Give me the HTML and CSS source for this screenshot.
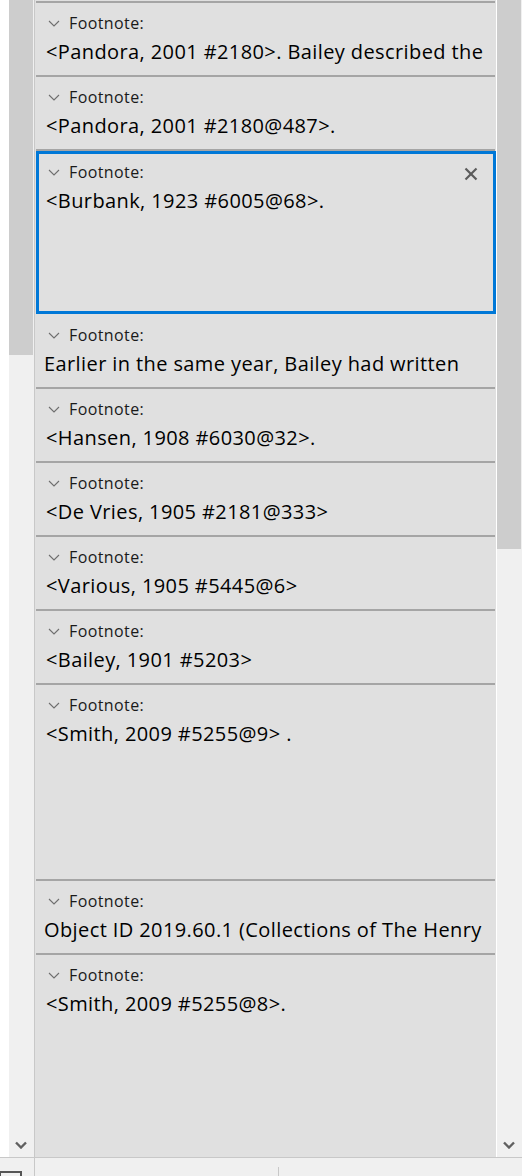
FILE: index.html
```html
<!DOCTYPE html>
<html lang="en">
<head>
  <meta charset="UTF-8">
  <title>Footnotes</title>
  <link rel="stylesheet" href="styles.css">
</head>
<body>
<div class="app">
  <div class="main">
    <div class="gutter"></div>

    <!-- left scrollbar -->
    <div class="vscroll left">
      <div class="thumb"></div>
      <svg class="arrow" width="12" height="8" viewBox="0 0 12 8"><polyline points="1,1.5 6,6.5 11,1.5" /></svg>
    </div>
    <div class="divider"></div>

    <!-- footnote list -->
    <div class="notes">
      <div class="note">
        <div class="fn-head"><svg class="chev" width="12" height="7" viewBox="0 0 12 7"><polyline points="1,1 6,6 11,1" /></svg>Footnote:</div>
        <div class="fn-text">&lt;Pandora, 2001 #2180&gt;. Bailey described the</div>
      </div>
      <div class="note">
        <div class="fn-head"><svg class="chev" width="12" height="7" viewBox="0 0 12 7"><polyline points="1,1 6,6 11,1" /></svg>Footnote:</div>
        <div class="fn-text">&lt;Pandora, 2001 #2180@487&gt;.</div>
      </div>
      <div class="note selected">
        <div class="sel-box">
          <div class="fn-head"><svg class="chev" width="12" height="7" viewBox="0 0 12 7"><polyline points="1,1 6,6 11,1" /></svg>Footnote:</div>
          <div class="fn-text">&lt;Burbank, 1923 #6005@68&gt;.</div>
          <svg class="close" width="14" height="14" viewBox="0 0 14 14"><line x1="1.5" y1="1.5" x2="12.5" y2="12.5" /><line x1="12.5" y1="1.5" x2="1.5" y2="12.5" /></svg>
        </div>
      </div>
      <div class="note after">
        <div class="fn-head"><svg class="chev" width="12" height="7" viewBox="0 0 12 7"><polyline points="1,1 6,6 11,1" /></svg>Footnote:</div>
        <div class="fn-text plain">Earlier in the same year, Bailey had written</div>
      </div>
      <div class="note">
        <div class="fn-head"><svg class="chev" width="12" height="7" viewBox="0 0 12 7"><polyline points="1,1 6,6 11,1" /></svg>Footnote:</div>
        <div class="fn-text">&lt;Hansen, 1908 #6030@32&gt;.</div>
      </div>
      <div class="note">
        <div class="fn-head"><svg class="chev" width="12" height="7" viewBox="0 0 12 7"><polyline points="1,1 6,6 11,1" /></svg>Footnote:</div>
        <div class="fn-text">&lt;De Vries, 1905 #2181@333&gt;</div>
      </div>
      <div class="note">
        <div class="fn-head"><svg class="chev" width="12" height="7" viewBox="0 0 12 7"><polyline points="1,1 6,6 11,1" /></svg>Footnote:</div>
        <div class="fn-text">&lt;Various, 1905 #5445@6&gt;</div>
      </div>
      <div class="note">
        <div class="fn-head"><svg class="chev" width="12" height="7" viewBox="0 0 12 7"><polyline points="1,1 6,6 11,1" /></svg>Footnote:</div>
        <div class="fn-text">&lt;Bailey, 1901 #5203&gt;</div>
      </div>
      <div class="note tall">
        <div class="fn-head"><svg class="chev" width="12" height="7" viewBox="0 0 12 7"><polyline points="1,1 6,6 11,1" /></svg>Footnote:</div>
        <div class="fn-text">&lt;Smith, 2009 #5255@9&gt; .</div>
      </div>
      <div class="note">
        <div class="fn-head"><svg class="chev" width="12" height="7" viewBox="0 0 12 7"><polyline points="1,1 6,6 11,1" /></svg>Footnote:</div>
        <div class="fn-text plain">Object ID 2019.60.1 (Collections of The Henry</div>
      </div>
      <div class="note last">
        <div class="fn-head"><svg class="chev" width="12" height="7" viewBox="0 0 12 7"><polyline points="1,1 6,6 11,1" /></svg>Footnote:</div>
        <div class="fn-text">&lt;Smith, 2009 #5255@8&gt;.</div>
      </div>
    </div>

    <div class="edge"></div>

    <!-- right scrollbar -->
    <div class="vscroll right">
      <div class="thumb"></div>
      <svg class="arrow" width="12" height="8" viewBox="0 0 12 8"><polyline points="1,1.5 6,6.5 11,1.5" /></svg>
    </div>
  </div>

  <!-- status bar -->
  <div class="statusbar">
    <div class="status-box"></div>
    <div class="status-line"></div>
    <div class="status-sep"></div>
  </div>
</div>
</body>
</html>
```

FILE: styles.css
```css
/* Base */
* {
  box-sizing: border-box;
}

body {
  margin: 0;
  background-color: #fff;
  font-family: "Open Sans", "Noto Sans", sans-serif;
}

.app {
  width: 522px;
  height: 1176px;
  display: flex;
  flex-direction: column;
  overflow: hidden;
}

.main {
  display: flex;
  height: 1157px;
}

.gutter {
  width: 9px;
  background-color: #fff;
}

/* Scrollbars */
.vscroll {
  width: 24px;
  background-color: #f0f0f0;
  display: flex;
  flex-direction: column;
  align-items: center;
}

.vscroll .thumb {
  width: 100%;
  background-color: #cdcdcd;
}

.left .thumb {
  height: 355px;
}

.right {
  width: 25px;
  border-right: 1px solid #f0f0f0;
}

.right .thumb {
  height: 549px;
}

.vscroll .arrow {
  margin-top: auto;
  margin-bottom: 8px;
}

.arrow polyline {
  fill: none;
  stroke: #606060;
  stroke-width: 2.4;
}

.divider {
  width: 2px;
  background-color: #f0f0f0;
  border-right: 1px solid #c8c8c8;
}

.edge {
  width: 1px;
  background-color: #fff;
}

/* Footnote list */
.notes {
  width: 461px;
  background-color: #e0e0e0;
  padding-top: 1px;
  padding-left: 1px;
  overflow: hidden;
}

.note {
  height: 74px;
  margin-right: 1px;
  border-top: 2px solid #a5a5a5;
  overflow: hidden;
}

.note.tall {
  height: 196px;
}

.note.last {
  height: 240px;
}

.note.after {
  height: 73px;
  border-top: 0;
  padding-top: 1px;
}

.note.selected {
  height: 165px;
  overflow: visible;
}

.sel-box {
  position: relative;
  height: 163px;
  margin-right: -1px;
  border: 3px solid #0078d7;
}

.fn-head {
  display: flex;
  align-items: center;
  gap: 9px;
  height: 20px;
  margin-top: 10px;
  padding-left: 12px;
  font-size: 16px;
  letter-spacing: 0.4px;
  color: #1a1a1a;
}

.sel-box .fn-head {
  margin-top: 8px;
  padding-left: 9px;
}

.chev polyline {
  fill: none;
  stroke: #6e6e6e;
  stroke-width: 1.1;
}

.fn-text {
  margin-top: 4px;
  padding-left: 10px;
  font-size: 20px;
  letter-spacing: 0.4px;
  line-height: 30px;
  color: #000;
  white-space: nowrap;
}

.fn-text.plain {
  padding-left: 8px;
}

.sel-box .fn-text {
  padding-left: 7px;
}

.close {
  position: absolute;
  top: 13px;
  right: 15px;
}

.close line {
  stroke: #5b5b5b;
  stroke-width: 2.2;
}

/* Status bar */
.statusbar {
  display: flex;
  height: 19px;
  background-color: #f0f0f0;
  border-top: 1px solid #c8c8c8;
}

.status-box {
  width: 22px;
  height: 12px;
  margin-top: 13px;
  border-top: 2px solid #555;
  border-right: 2px solid #555;
  border-left: 1px solid #555;
}

.status-line {
  width: 1px;
  margin-left: 12px;
  background-color: #c8c8c8;
}

.status-sep {
  width: 1px;
  height: 9px;
  margin-top: 9px;
  margin-left: 243px;
  background-color: #c8c8c8;
}
```
